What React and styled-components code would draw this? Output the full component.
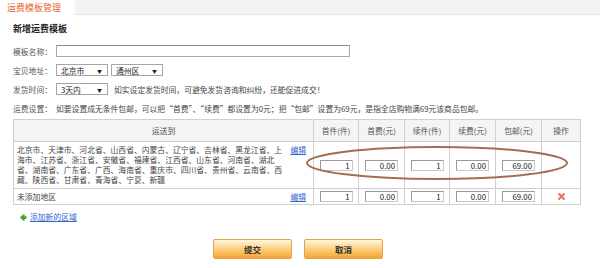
import React from "react";
import styled, { createGlobalStyle } from "styled-components";

const Global = createGlobalStyle`
  html, body { margin: 0; padding: 0; background: #fff; }
  body {
    font-family: "Noto Sans CJK SC", "Noto Sans", sans-serif;
    font-size: 7.8px;
    color: #333;
  }
`;

const Page = styled.div`
  width: 600px;
  height: 268px;
  overflow: hidden;
`;

const TabBar = styled.div`
  display: flex;
  height: 15px;
`;

const Tab = styled.div`
  width: 75px;
  box-sizing: border-box;
  padding-left: 7px;
  line-height: 15px;
  font-size: 9px;
  color: #e8632d;
`;

const TabFill = styled.div`
  flex: 1;
  background: #f3f3f3;
  border-bottom: 1px solid #e3e3e3;
  box-sizing: border-box;
`;

const Content = styled.div`
  padding-left: 13px;
`;

const Title = styled.div`
  margin-top: 8px;
  line-height: 12px;
  font-size: 9px;
  font-weight: bold;
  color: #222;
`;

const Form = styled.div`
  margin-top: 10px;
  display: flex;
  flex-direction: column;
  gap: 7px;
`;

const Row = styled.div`
  display: flex;
  align-items: center;
  height: 12px;
  gap: ${(p) => p.$gap || 0}px;
`;

const Label = styled.span`
  flex: 0 0 43px;
  color: #555;
  white-space: nowrap;
`;

const TextInput = styled.div`
  width: 294px;
  height: 12px;
  box-sizing: border-box;
  border: 1px solid #a9a9a9;
  border-top-color: #8f8f8f;
  background: #fff;
`;

const Select = styled.div`
  display: inline-flex;
  align-items: center;
  justify-content: space-between;
  width: ${(p) => p.$w}px;
  height: 12px;
  box-sizing: border-box;
  border: 1px solid #a5a5a5;
  padding: 0 5px 0 4px;
  background: #fff;
  color: #222;
  margin-right: ${(p) => p.$mr || 0}px;
`;

const Arrow = styled.span`
  font-size: 5px;
  color: #222;
`;

const Hint = styled.span`
  color: #444;
  white-space: nowrap;
`;

const TableWrap = styled.div`
  position: relative;
  margin-top: 5px;
  width: 567px;
`;

const Table = styled.table`
  width: 567px;
  border-collapse: collapse;
  table-layout: fixed;
`;

const Th = styled.th`
  height: 21px;
  padding: 0;
  background: #f4f4f4;
  border: 1px solid #cfcfcf;
  font-weight: normal;
  color: #555;
  text-align: center;
`;

const Td = styled.td`
  height: ${(p) => p.$h}px;
  padding: 0;
  border: 1px solid #cfcfcf;
  text-align: center;
  vertical-align: middle;
  color: #444;
`;

const AreaCell = styled.div`
  display: flex;
  align-items: flex-start;
  justify-content: space-between;
  padding: 0 7px 0 3px;
  line-height: 10px;
  text-align: left;
`;

const AreaText = styled.div`
  white-space: nowrap;
`;

const Line = styled.div``;

const Link = styled.a`
  color: #3366cc;
  text-decoration: underline;
  cursor: pointer;
  white-space: nowrap;
`;

const NumInput = styled.div`
  display: inline-block;
  width: 33px;
  height: 11px;
  box-sizing: border-box;
  border: 1px solid #9a9a9a;
  border-right-color: #c8c8c8;
  border-bottom-color: #c8c8c8;
  padding-right: 2px;
  line-height: 9px;
  text-align: right;
  color: #222;
  background: #fff;
`;

const Overlay = styled.svg`
  position: absolute;
  left: 0;
  top: 0;
  width: 567px;
  height: 90px;
  pointer-events: none;
`;

const AddRow = styled.div`
  margin-top: 6px;
  padding-left: 7px;
  display: flex;
  align-items: center;
  gap: 3px;
  line-height: 12px;
`;

const Buttons = styled.div`
  margin-top: 16px;
  padding-left: 200px;
  display: flex;
  gap: 12px;
`;

const Button = styled.button`
  width: 79px;
  height: 20px;
  box-sizing: border-box;
  border: 1px solid #e2a24a;
  border-radius: 2px;
  background: linear-gradient(#fff6dc 0%, #fcd38a 45%, #f7a431 100%);
  font-family: "Noto Sans CJK SC", sans-serif;
  font-size: 8.5px;
  font-weight: 600;
  color: #333;
  padding: 0;
`;

const Plus = () => (
  <svg width="7" height="7" viewBox="0 0 7 7">
    <path d="M2.3 0.5h2.4v1.8h1.8v2.4H4.7v1.8H2.3V4.7H0.5V2.3h1.8z" fill="#3f9b2e" />
    <path d="M2.8 1h1.4v1.8" stroke="#9ad27f" strokeWidth="0.6" fill="none" />
  </svg>
);

const Del = () => (
  <svg width="7" height="7" viewBox="0 0 7 7">
    <path d="M1 1L6 6M6 1L1 6" stroke="#ee6b4d" strokeWidth="1.8" strokeLinecap="round" />
  </svg>
);

const areaLines = [
  "北京市、天津市、河北省、山西省、内蒙古、辽宁省、吉林省、黑龙江省、上",
  "海市、江苏省、浙江省、安徽省、福建省、江西省、山东省、河南省、湖北",
  "省、湖南省、广东省、广西、海南省、重庆市、四川省、贵州省、云南省、西",
  "藏、陕西省、甘肃省、青海省、宁夏、新疆",
];

const rows = [
  { lines: areaLines, h: 46, values: ["1", "0.00", "1", "0.00", "69.00"], del: false },
  { lines: ["未添加地区"], h: 15, values: ["1", "0.00", "1", "0.00", "69.00"], del: true },
];

const headers = ["运送到", "首件(件)", "首费(元)", "续件(件)", "续费(元)", "包邮(元)", "操作"];
const widths = [300, 45, 46, 45, 46, 46, 39];

export default function App() {
  return (
    <Page>
      <Global />
      <TabBar>
        <Tab>运费模板管理</Tab>
        <TabFill />
      </TabBar>
      <Content>
        <Title>新增运费模板</Title>
        <Form>
          <Row>
            <Label>模板名称：</Label>
            <TextInput />
          </Row>
          <Row>
            <Label>宝贝地址：</Label>
            <Select $w={52} $mr={3}>
              北京市<Arrow>▼</Arrow>
            </Select>
            <Select $w={52}>
              通州区<Arrow>▼</Arrow>
            </Select>
          </Row>
          <Row>
            <Label>发货时间：</Label>
            <Select $w={52} $mr={6}>
              3天内<Arrow>▼</Arrow>
            </Select>
            <Hint>如实设定发货时间，可避免发货咨询和纠纷，还能促进成交！</Hint>
          </Row>
          <Row>
            <Label>运费设置：</Label>
            <Hint>
              如要设置成无条件包邮，可以把“首费”、“续费”都设置为0元；把“包邮”设置为69元，是指全店购物满69元该商品包邮。
            </Hint>
          </Row>
        </Form>
        <TableWrap>
          <Table>
            <colgroup>
              {widths.map((w, i) => (
                <col key={i} style={{ width: w }} />
              ))}
            </colgroup>
            <thead>
              <tr>
                {headers.map((h) => (
                  <Th key={h}>{h}</Th>
                ))}
              </tr>
            </thead>
            <tbody>
              {rows.map((r, ri) => (
                <tr key={ri}>
                  <Td $h={r.h}>
                    <AreaCell>
                      <AreaText>
                        {r.lines.map((l) => (
                          <Line key={l}>{l}</Line>
                        ))}
                      </AreaText>
                      <Link>编辑</Link>
                    </AreaCell>
                  </Td>
                  {r.values.map((v, vi) => (
                    <Td key={vi} $h={r.h}>
                      <NumInput>{v}</NumInput>
                    </Td>
                  ))}
                  <Td $h={r.h}>{r.del ? <Del /> : null}</Td>
                </tr>
              ))}
            </tbody>
          </Table>
          <Overlay viewBox="0 0 567 90">
            <ellipse cx="424" cy="44" rx="130" ry="16" fill="none" stroke="#a36e4f" strokeWidth="2" />
          </Overlay>
        </TableWrap>
        <AddRow>
          <Plus />
          <Link>添加新的区域</Link>
        </AddRow>
        <Buttons>
          <Button>提交</Button>
          <Button>取消</Button>
        </Buttons>
      </Content>
    </Page>
  );
}
